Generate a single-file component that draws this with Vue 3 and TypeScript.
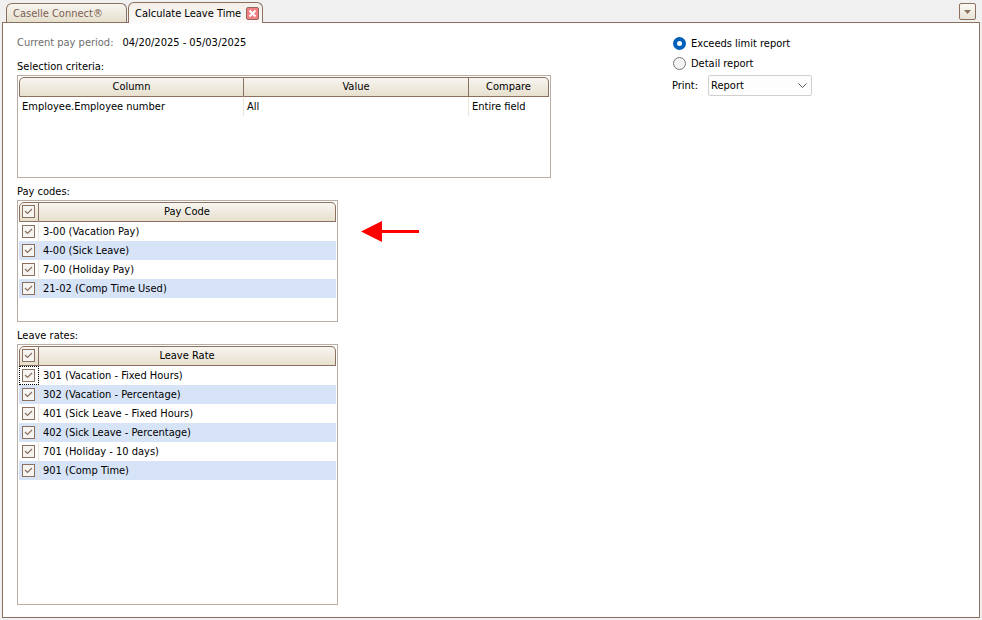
<script setup lang="ts">
import { computed, reactive, ref } from 'vue'

interface Item {
  id: string
  name: string
  checked: boolean
}

interface Group {
  key: string
  caption: string
  heading: string
  items: Item[]
}

const makeItems = (prefix: string, names: string[]): Item[] =>
  names.map((name, i) => ({ id: `${prefix}-${i}`, name, checked: true }))

const payCodes = reactive<Group>({
  key: 'pay',
  caption: 'Pay codes:',
  heading: 'Pay Code',
  items: makeItems('pay', ['3-00 (Vacation Pay)', '4-00 (Sick Leave)', '7-00 (Holiday Pay)', '21-02 (Comp Time Used)']),
})

const leaveRates = reactive<Group>({
  key: 'leave',
  caption: 'Leave rates:',
  heading: 'Leave Rate',
  items: makeItems('leave', [
    '301 (Vacation - Fixed Hours)',
    '302 (Vacation - Percentage)',
    '401 (Sick Leave - Fixed Hours)',
    '402 (Sick Leave - Percentage)',
    '701 (Holiday - 10 days)',
    '901 (Comp Time)',
  ]),
})

const groups = computed<Group[]>(() => [payCodes, leaveRates])

const criteria = [{ column: 'Employee.Employee number', value: 'All', compare: 'Entire field' }]

const report = ref<'exceeds' | 'detail'>('exceeds')
const print = ref('Report')
const focusedId = ref('leave-0')

const allChecked = (group: Group): boolean => group.items.every((item) => item.checked)
const toggleAll = (group: Group): void => {
  const next = !allChecked(group)
  group.items.forEach((item) => (item.checked = next))
}
</script>

<template>
  <div class="window">
    <nav class="tabs">
      <button type="button" class="tab">Caselle Connect®</button>
      <div class="tab active">
        <button type="button" class="tab-name">Calculate Leave Time</button>
        <button type="button" class="close" aria-label="Close tab">
          <svg width="11" height="11" viewBox="0 0 11 11">
            <path d="M2.5 2.5L8.5 8.5M8.5 2.5L2.5 8.5" stroke="#fff" stroke-width="2" />
          </svg>
        </button>
      </div>
      <button type="button" class="tab-menu" aria-label="Open tabs">
        <svg width="7" height="4" viewBox="0 0 7 4"><path d="M0 0H7L3.5 4Z" fill="#8b6f5f" /></svg>
      </button>
    </nav>

    <main class="page">
      <div class="left">
        <div class="period">
          <span class="muted">Current pay period:</span>
          <span>04/20/2025 - 05/03/2025</span>
        </div>

        <section class="block">
          <h2 id="criteria-caption" class="caption">Selection criteria:</h2>
          <div class="grid criteria">
            <table aria-labelledby="criteria-caption">
              <colgroup>
                <col class="col-wide" />
                <col class="col-wide" />
                <col />
              </colgroup>
              <thead>
                <tr>
                  <th>Column</th>
                  <th>Value</th>
                  <th>Compare</th>
                </tr>
              </thead>
              <tbody>
                <tr v-for="row in criteria" :key="row.column">
                  <td>{{ row.column }}</td>
                  <td>{{ row.value }}</td>
                  <td>{{ row.compare }}</td>
                </tr>
              </tbody>
            </table>
          </div>
        </section>

        <section v-for="group in groups" :key="group.key" class="block" :class="group.key">
          <h2 :id="`${group.key}-caption`" class="caption">{{ group.caption }}</h2>
          <div class="grid-row">
            <div class="grid list">
              <table :aria-labelledby="`${group.key}-caption`">
                <colgroup>
                  <col class="col-check" />
                  <col />
                </colgroup>
                <thead>
                  <tr>
                    <th class="check-cell">
                      <span class="check">
                        <input
                          type="checkbox"
                          :checked="allChecked(group)"
                          :aria-label="`Select all: ${group.heading}`"
                          @change="toggleAll(group)"
                        />
                        <svg width="13" height="13" viewBox="0 0 13 13"><path d="M3 6L5.5 8.5L10 4" /></svg>
                      </span>
                    </th>
                    <th>{{ group.heading }}</th>
                  </tr>
                </thead>
                <tbody>
                  <tr v-for="item in group.items" :key="item.id">
                    <td class="check-cell" :class="{ focused: item.id === focusedId }">
                      <span class="check">
                        <input :id="item.id" v-model="item.checked" type="checkbox" @focus="focusedId = item.id" />
                        <svg width="13" height="13" viewBox="0 0 13 13"><path d="M3 6L5.5 8.5L10 4" /></svg>
                      </span>
                    </td>
                    <td>
                      <label :for="item.id">{{ item.name }}</label>
                    </td>
                  </tr>
                </tbody>
              </table>
            </div>
            <svg v-if="group.key === 'pay'" class="arrow" width="58" height="22" viewBox="0 0 58 22">
              <path d="M0 10.5L21 0V9H58V12H21V21Z" fill="#f00" />
            </svg>
          </div>
        </section>
      </div>

      <form class="options" @submit.prevent>
        <label class="radio"><input v-model="report" type="radio" name="report" value="exceeds" />Exceeds limit report</label>
        <label class="radio"><input v-model="report" type="radio" name="report" value="detail" />Detail report</label>
        <div class="print">
          <label for="print">Print:</label>
          <span class="select">
            <select id="print" v-model="print">
              <option>Report</option>
            </select>
            <svg width="9" height="5" viewBox="0 0 9 5">
              <path d="M0.5 0.5L4.5 4.5L8.5 0.5" fill="none" stroke="#555" />
            </svg>
          </span>
        </div>
      </form>
    </main>
  </div>
</template>

<style>
body {
  margin: 0;
  background: #f0f0f0;
}
</style>

<style scoped>
* {
  box-sizing: border-box;
}

.window {
  display: flex;
  flex-direction: column;
  min-height: 100vh;
  padding: 2px;
  font: 11px/17px 'DejaVu Sans Condensed', 'Noto Sans', sans-serif;
  color: #000;
  background: #f0f0f0;
}

button,
select {
  margin: 0;
  padding: 0;
  border: 0;
  background: none;
  color: inherit;
  font: inherit;
}

svg {
  display: block;
}

.tabs {
  display: flex;
  align-items: flex-end;
  gap: 1px;
  padding: 0 4px;
}

.tab {
  height: 19px;
  width: 121px;
  padding: 0 6px;
  border: 1px solid #8b6f5f;
  border-bottom: 0;
  border-radius: 6px 6px 0 0;
  background: linear-gradient(#f7f5f0, #e6dfcd);
  color: #7d5f55;
  text-align: left;
  white-space: nowrap;
}

.tab.active {
  display: flex;
  align-items: center;
  justify-content: space-between;
  width: 135px;
  height: 21px;
  margin-bottom: -1px;
  padding: 0 3px 0 6px;
  position: relative;
  background: linear-gradient(#f3f0ea, #fbfaf8);
  color: #000;
}

.close {
  display: grid;
  place-items: center;
  width: 13px;
  height: 13px;
  border: 1px solid #94665c;
  border-radius: 2px;
  background: #f37f83;
}

.tab-menu {
  display: grid;
  place-items: center;
  width: 17px;
  height: 17px;
  margin: 0 0 2px auto;
  border: 1px solid #8b6f5f;
  border-radius: 2px;
  background: linear-gradient(#faf9f5, #e9e3d4);
}

.page {
  display: flex;
  flex: 1;
  padding: 11px 14px 12px;
  border: 1px solid #8b6f5f;
  background: #fff;
}

.left {
  display: flex;
  flex-direction: column;
  flex: 0 1 655px;
}

.period {
  display: flex;
  gap: 9px;
  margin-bottom: 7px;
}

.muted {
  color: #6d6d6d;
}

.block + .block {
  margin-top: 5px;
}

.caption {
  margin: 0;
  font: inherit;
}

.grid {
  padding: 1px;
  border: 1px solid #b9aca2;
}

.criteria {
  max-width: 534px;
  min-height: 103px;
}

.grid-row {
  display: flex;
  gap: 23px;
  flex: 1;
}

.list {
  flex: 0 1 321px;
}

.pay .list {
  min-height: 122px;
}

.leave {
  display: flex;
  flex: 1;
  flex-direction: column;
}

table {
  width: 100%;
  table-layout: fixed;
  border-collapse: separate;
  border-spacing: 0;
}

.col-wide {
  width: 225px;
}

.col-check {
  width: 20px;
}

th {
  height: 20px;
  padding: 0 0 1px;
  border: 1px solid #8b6f5f;
  border-left-width: 0;
  background: linear-gradient(#f7f5f1, #e7e0ce);
  font-weight: normal;
}

th:first-child {
  border-left-width: 1px;
  border-top-left-radius: 5px;
}

th:last-child {
  border-top-right-radius: 5px;
}

td {
  height: 19px;
  padding: 0 3px;
  border-right: 1px solid #ece5d8;
}

td:last-child {
  border-right: 0;
}

.list td {
  padding: 0 4px;
}

.list tbody tr:nth-child(even) {
  background: #d7e4f8;
}

.list th.check-cell {
  padding: 0 2px 1px;
}

.list td.check-cell {
  padding: 0 3px;
}

.focused {
  outline: 1px dotted #000;
  outline-offset: -1px;
}

.check {
  display: grid;
  width: 13px;
}

.check > * {
  grid-area: 1 / 1;
}

.check input {
  width: 13px;
  height: 13px;
  margin: 0;
  border: 1px solid #8b6f5f;
  background: #f7f5f2;
  appearance: none;
}

.check svg {
  fill: none;
  stroke: #8b6f5f;
  stroke-width: 1.2;
  pointer-events: none;
  visibility: hidden;
}

.check input:checked + svg {
  visibility: visible;
}

.arrow {
  margin-top: 21px;
}

.options {
  display: flex;
  flex-direction: column;
  gap: 3px;
  padding-top: 1px;
}

.radio {
  display: flex;
  align-items: center;
  gap: 5px;
  padding-left: 1px;
}

.radio input {
  width: 13px;
  height: 13px;
  margin: 0;
  border: 1px solid #777;
  border-radius: 50%;
  background: #f3f3f3;
  appearance: none;
}

.radio input:checked {
  border: 4px solid #005fb8;
  background: #fff;
}

.print {
  display: flex;
  align-items: center;
  gap: 10px;
}

.select {
  display: grid;
  align-items: center;
  width: 104px;
}

.select > * {
  grid-area: 1 / 1;
}

.select select {
  height: 21px;
  padding: 0 2px;
  border: 1px solid #d0d0d0;
  border-radius: 2px;
  background: #fdfdfd;
  appearance: none;
}

.select svg {
  justify-self: end;
  margin-right: 5px;
  pointer-events: none;
}
</style>
